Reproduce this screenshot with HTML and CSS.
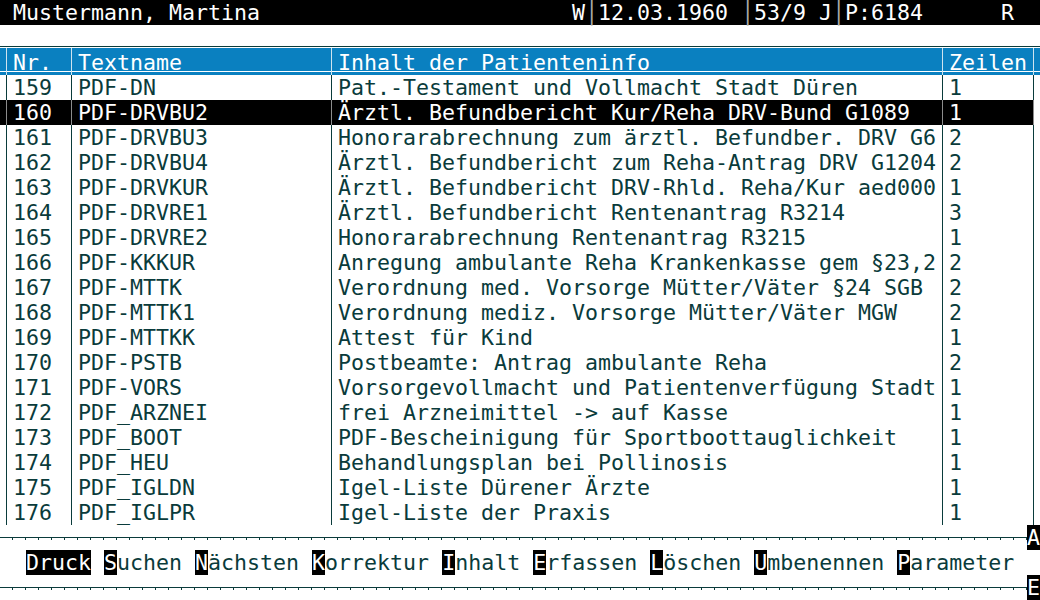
FILE: index.html
```html
<!DOCTYPE html>
<html lang="de">

<head>
    <meta charset="UTF-8">
    <meta name="viewport" content="width=device-width, initial-scale=1.0">
    <title>Patienteninfo</title>
    <link rel="stylesheet" href="styles.css">
</head>

<body>

    <div id="screen">
        <div class="topbar"> Mustermann, Martina                        W<span class="bar">│</span>12.03.1960 <span class="bar">│</span>53/9 J<span class="bar">│</span>P:6184      R  </div>

        <div class="spacer"></div>

        <div class="grid head">
            <div>Nr.</div>
            <div>Textname</div>
            <div>Inhalt der Patienteninfo</div>
            <div>Zeilen</div>
        </div>

        <div class="list">
            <div class="grid row"><div>159</div><div>PDF-DN</div><div>Pat.-Testament und Vollmacht Stadt Düren</div><div>1</div></div>
            <div class="grid row selected"><div>160</div><div>PDF-DRVBU2</div><div>Ärztl. Befundbericht Kur/Reha DRV-Bund G1089</div><div>1</div></div>
            <div class="grid row"><div>161</div><div>PDF-DRVBU3</div><div>Honorarabrechnung zum ärztl. Befundber. DRV G6</div><div>2</div></div>
            <div class="grid row"><div>162</div><div>PDF-DRVBU4</div><div>Ärztl. Befundbericht zum Reha-Antrag DRV G1204</div><div>2</div></div>
            <div class="grid row"><div>163</div><div>PDF-DRVKUR</div><div>Ärztl. Befundbericht DRV-Rhld. Reha/Kur aed000</div><div>1</div></div>
            <div class="grid row"><div>164</div><div>PDF-DRVRE1</div><div>Ärztl. Befundbericht Rentenantrag R3214</div><div>3</div></div>
            <div class="grid row"><div>165</div><div>PDF-DRVRE2</div><div>Honorarabrechnung Rentenantrag R3215</div><div>1</div></div>
            <div class="grid row"><div>166</div><div>PDF-KKKUR</div><div>Anregung ambulante Reha Krankenkasse gem §23,2</div><div>2</div></div>
            <div class="grid row"><div>167</div><div>PDF-MTTK</div><div>Verordnung med. Vorsorge Mütter/Väter §24 SGB</div><div>2</div></div>
            <div class="grid row"><div>168</div><div>PDF-MTTK1</div><div>Verordnung mediz. Vorsorge Mütter/Väter MGW</div><div>2</div></div>
            <div class="grid row"><div>169</div><div>PDF-MTTKK</div><div>Attest für Kind</div><div>1</div></div>
            <div class="grid row"><div>170</div><div>PDF-PSTB</div><div>Postbeamte: Antrag ambulante Reha</div><div>2</div></div>
            <div class="grid row"><div>171</div><div>PDF-VORS</div><div>Vorsorgevollmacht und Patientenverfügung Stadt</div><div>1</div></div>
            <div class="grid row"><div>172</div><div>PDF_ARZNEI</div><div>frei Arzneimittel -&gt; auf Kasse</div><div>1</div></div>
            <div class="grid row"><div>173</div><div>PDF_BOOT</div><div>PDF-Bescheinigung für Sportboottauglichkeit</div><div>1</div></div>
            <div class="grid row"><div>174</div><div>PDF_HEU</div><div>Behandlungsplan bei Pollinosis</div><div>1</div></div>
            <div class="grid row"><div>175</div><div>PDF_IGLDN</div><div>Igel-Liste Dürener Ärzte</div><div>1</div></div>
            <div class="grid row"><div>176</div><div>PDF_IGLPR</div><div>Igel-Liste der Praxis</div><div>1</div></div>
        </div>

        <div class="rule"><div class="line"></div><span class="tag">A</span></div>

        <div class="menu"><span class="key">Druck</span> <span class="key">S</span>uchen <span class="key">N</span>ächsten <span class="key">K</span>orrektur <span class="key">I</span>nhalt <span class="key">E</span>rfassen <span class="key">L</span>öschen <span class="key">U</span>mbenennen <span class="key">P</span>arameter</div>

        <div class="rule"><div class="line"></div><span class="tag">E</span></div>
    </div>

</body>

</html>
```

FILE: styles.css
```css
body {
    margin: 0;
    padding: 0;
    background: #fff;
    font-family: "DejaVu Sans Mono", "Liberation Mono", monospace;
    font-size: 21.6px; /* 13px per cell */
    line-height: 25px;
    color: #0a3b3b;
}

#screen {
    width: 1040px;
    height: 600px;
    overflow: hidden;
}

.topbar {
    height: 25px;
    background: #000;
    color: #fff;
    white-space: pre;
}

.topbar .bar {
    color: #a8a8a8;
}

.spacer {
    height: 23px;
    background: linear-gradient(#0a3b3b, #0a3b3b) 0 21px / 100% 1px no-repeat;
}

/* columns: 0-4 | 5-24 | 25-71 | 72-79, separator sits in first cell */
.grid {
    display: grid;
    grid-template-columns: 65px 260px 611px 104px;
    --ln: #0a3b3b;
    --fill: linear-gradient(#fff, #fff);
    background:
        linear-gradient(var(--ln), var(--ln)) 6px 0 / 1px 100% no-repeat,
        linear-gradient(var(--ln), var(--ln)) 71px 0 / 1px 100% no-repeat,
        linear-gradient(var(--ln), var(--ln)) 331px 0 / 1px 100% no-repeat,
        linear-gradient(var(--ln), var(--ln)) 942px 0 / 1px 100% no-repeat,
        linear-gradient(var(--ln), var(--ln)) 1033px 0 / 1px 100% no-repeat,
        var(--fill) 0 0 / 1033px 100% no-repeat;
}

.grid > div {
    padding-left: 13px;
    overflow: hidden;
    height: 25px;
    white-space: pre;
}

.head {
    height: 27px;
    padding-top: 2px;
    box-sizing: border-box;
    color: #fff;
    --ln: #cfe4ef;
    --fill: linear-gradient(#fff, #fff) 0 23px / 100% 1px no-repeat, linear-gradient(#0a80c0, #0a80c0);
    background-size: 1px 100%, 1px 100%, 1px 100%, 1px 100%, 1px 100%, 100% 1px, 100% 100%;
    background-position: 6px 0, 71px 0, 331px 0, 942px 0, 1033px 0, 0 23px, 0 0;
}

.head > div {
    height: 25px;
}

.row.selected {
    color: #fff;
    --ln: #8c8c8c;
    --fill: linear-gradient(#000, #000);
}

.rule {
    display: flex;
    height: 25px;
}

.rule .line {
    flex: 1;
    background:
        linear-gradient(#0a3b3b, #0a3b3b) 0 12px / 100% 1px no-repeat,
        repeating-linear-gradient(to right, transparent 0 12px, #0a3b3b 12px 13px) 0 13px / 100% 2px no-repeat;
}

.tag {
    width: 13px;
    background: #000;
    color: #fff;
}

.menu {
    height: 25px;
    padding-left: 26px;
    white-space: pre;
}

.key {
    background: #000;
    color: #fff;
}
```
